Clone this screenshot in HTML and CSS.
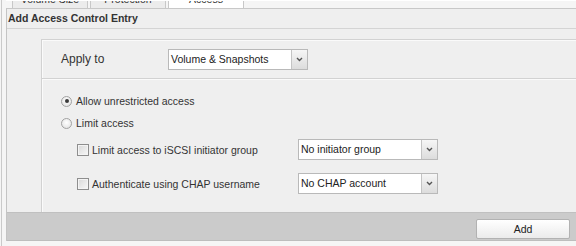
FILE: index.html
```html
<!DOCTYPE html>
<html lang="en">
<head>
    <meta charset="UTF-8" />
    <title>Add Access Control Entry</title>
    <link rel="stylesheet" href="styles.css">
</head>
<body>
    <div class="frame">
        <div class="tabs">
            <div class="tab">Volume Size</div>
            <div class="tab">Protection</div>
            <div class="tab active">Access</div>
        </div>

        <div class="dialog">
            <div class="title">Add Access Control Entry</div>

            <div class="body">
                <div class="panel">
                    <div class="apply-row">
                        <span class="apply-label">Apply to</span>
                        <div class="select select-apply">
                            <span class="select-text">Volume &amp; Snapshots</span>
                            <span class="select-arrow">
                                <svg width="7" height="5" viewBox="0 0 7 5"><polyline points="1,1 3.5,3.5 6,1" fill="none" stroke="#555" stroke-width="1.4"/></svg>
                            </span>
                        </div>
                    </div>

                    <div class="access">
                        <label class="radio-row">
                            <span class="radio checked"></span>
                            Allow unrestricted access
                        </label>
                        <label class="radio-row">
                            <span class="radio"></span>
                            Limit access
                        </label>

                        <div class="option-row first">
                            <label class="option-label">
                                <span class="checkbox"></span>
                                Limit access to iSCSI initiator group
                            </label>
                            <div class="select">
                                <span class="select-text">No initiator group</span>
                                <span class="select-arrow">
                                    <svg width="7" height="5" viewBox="0 0 7 5"><polyline points="1,1 3.5,3.5 6,1" fill="none" stroke="#555" stroke-width="1.4"/></svg>
                                </span>
                            </div>
                        </div>

                        <div class="option-row">
                            <label class="option-label">
                                <span class="checkbox"></span>
                                Authenticate using CHAP username
                            </label>
                            <div class="select">
                                <span class="select-text">No CHAP account</span>
                                <span class="select-arrow">
                                    <svg width="7" height="5" viewBox="0 0 7 5"><polyline points="1,1 3.5,3.5 6,1" fill="none" stroke="#555" stroke-width="1.4"/></svg>
                                </span>
                            </div>
                        </div>
                    </div>
                </div>
            </div>

            <div class="footer">
                <button class="add-button">Add</button>
            </div>
        </div>
    </div>
</body>
</html>
```

FILE: styles.css
```css
body {
    font-family: "Liberation Sans", Arial, sans-serif;
    font-size: 10.5px;
    color: #222;
    margin: 0;
    background: #f5f5f5;
    overflow: hidden;
}

.frame {
    margin-left: 1px;
    padding-left: 4px;
    height: 246px;
    border-left: 1px solid #cacaca;
}

/* tab strip, mostly scrolled out of view */
.tabs {
    display: flex;
    align-items: flex-end;
    height: 8px;
    overflow: hidden;
    padding-left: 6px;
    border-top: 1px solid #fff;
    box-sizing: border-box;
}

.tab {
    width: 76px;
    height: 16px;
    margin-right: 2px;
    line-height: 12px;
    text-align: center;
    color: #333;
    background: #ececec;
    border: 1px solid #c8c8c8;
    border-bottom: none;
    box-sizing: border-box;
}

.tab.active {
    background: #fff;
}

.dialog {
    background: #efefef;
    border-left: 1px solid #c4c4c4;
    border-top: 1px solid #c8c8c8;
}

.title {
    height: 19px;
    line-height: 19px;
    padding-left: 1px;
    font-weight: bold;
    color: #333;
    border-bottom: 1px solid #d4d4d4;
}

.body {
    padding: 10px 0 0 34px;
}

.panel {
    height: 173px;
    box-sizing: border-box;
    border-left: 1px solid #d2d2d2;
    border-top: 1px solid #d2d2d2;
    box-shadow: inset 1px 1px 0 #fafafa;
}

.apply-row {
    display: flex;
    align-items: center;
    height: 38px;
    padding-left: 19px;
    border-bottom: 1px solid #d2d2d2;
}

.apply-label {
    width: 107px;
    font-size: 12px;
    color: #333;
}

.select {
    display: flex;
    width: 140px;
    height: 21px;
    box-sizing: border-box;
    border: 1px solid #b9b9b9;
    background: #fff;
}

.select-text {
    flex: 1;
    padding-left: 2px;
    line-height: 19px;
    color: #222;
}

.select-arrow {
    display: flex;
    align-items: center;
    justify-content: center;
    width: 15px;
    border-left: 1px solid #c4c4c4;
    background: linear-gradient(#f6f6f6, #dcdcdc);
}

.access {
    border-top: 1px solid #fafafa;
    padding: 10px 0 0 19px;
}

.radio-row {
    display: flex;
    align-items: center;
    height: 22px;
    color: #333;
}

.radio {
    width: 11px;
    height: 11px;
    margin-right: 4px;
    box-sizing: border-box;
    border: 1px solid #a2a2a2;
    border-radius: 50%;
    background: radial-gradient(circle at 50% 40%, #fff, #dedede);
    position: relative;
}

.radio.checked::after {
    content: '';
    position: absolute;
    left: 2.5px;
    top: 2.5px;
    width: 4px;
    height: 4px;
    border-radius: 50%;
    background: #3a3a3a;
}

.option-row {
    display: flex;
    align-items: center;
    margin: 13px 0 0 16px;
}

.option-row.first {
    margin-top: 5px;
}

.option-label {
    display: flex;
    align-items: center;
    width: 221px;
    color: #333;
}

.checkbox {
    width: 12px;
    height: 12px;
    margin-right: 3px;
    box-sizing: border-box;
    border: 1px solid #8e8e8e;
    background: linear-gradient(135deg, #d8d8d8, #f8f8f8);
    box-shadow: inset 0 0 0 1px #f4f4f4;
}

.footer {
    display: flex;
    justify-content: flex-end;
    height: 29px;
    padding: 6px 6px 0 0;
    box-sizing: border-box;
    background: #cbcbcb;
    border-top: 1px solid #c0c0c0;
    border-bottom: 1px solid #bdbdbd;
}

.add-button {
    width: 94px;
    height: 20px;
    padding: 0;
    font-family: inherit;
    font-size: 10.5px;
    color: #222;
    border: 1px solid #b2b2b2;
    border-radius: 2px;
    background: linear-gradient(#ffffff, #ebebeb);
}
```
